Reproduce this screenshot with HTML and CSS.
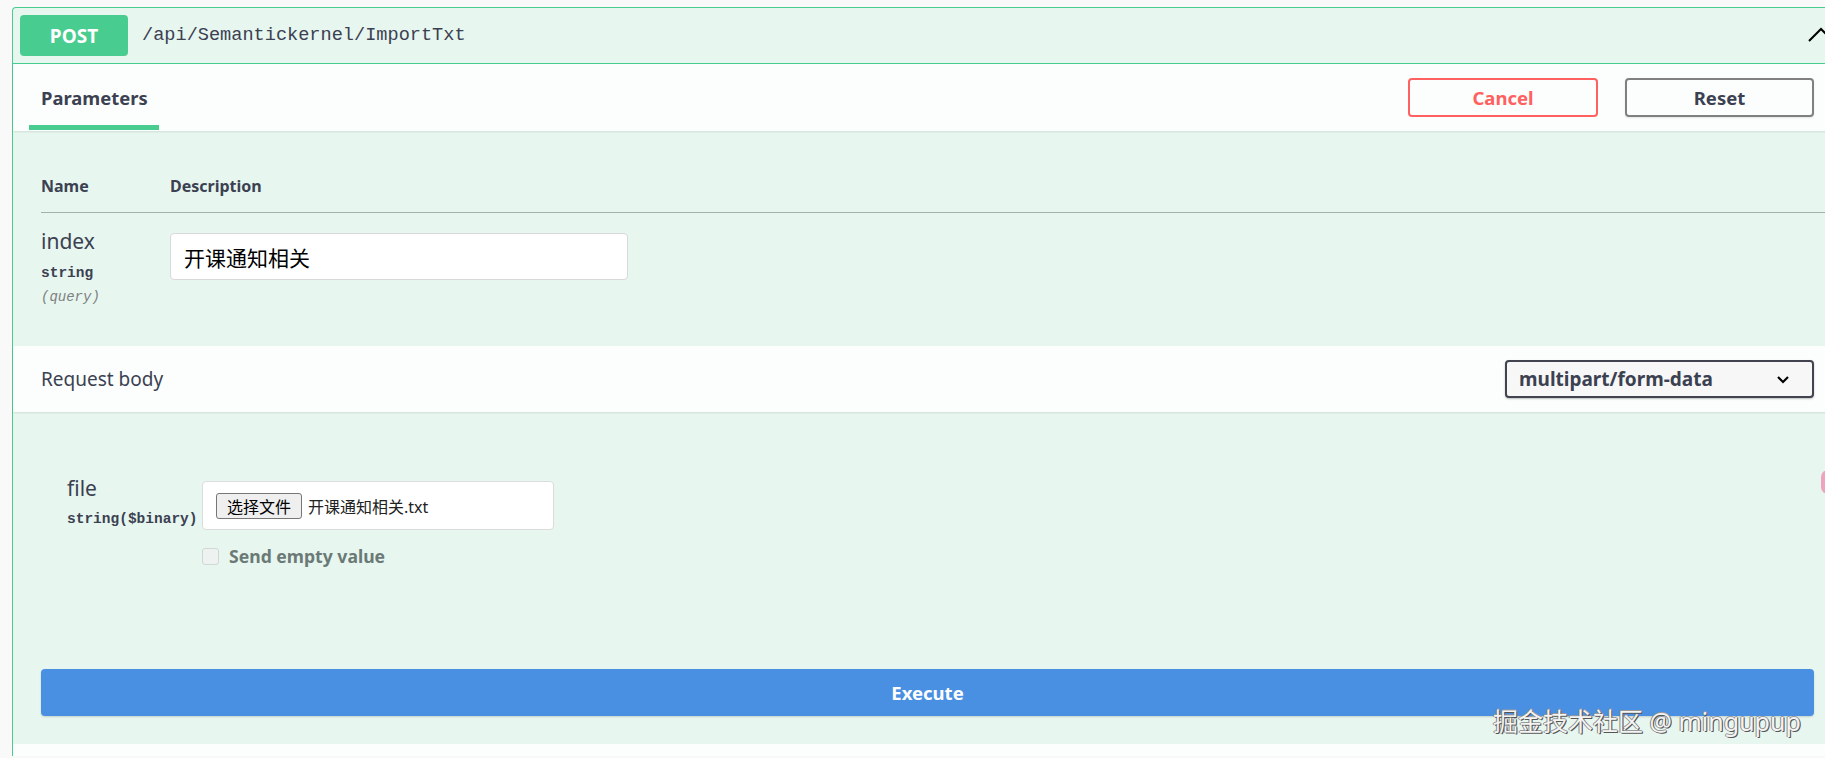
FILE: index.html
```html
<!DOCTYPE html>
<html lang="zh-CN">
<head>
<meta charset="utf-8">
<title>Swagger - ImportTxt</title>
<link rel="stylesheet" href="styles.css">
</head>
<body>
<div class="opblock">
  <div class="summary">
    <span class="method">POST</span>
    <span class="path">/api/Semantickernel/ImportTxt</span>
    <svg class="toggle" width="26" height="15" viewBox="0 0 26 15"><polyline points="1,14 13,2 25,14" fill="none" stroke="#000" stroke-width="2"/></svg>
  </div>
  <div class="opbody">
    <div class="section-header">
      <div class="tab">Parameters</div>
      <div class="actions">
        <button class="btn cancel">Cancel</button>
        <button class="btn reset">Reset</button>
      </div>
    </div>
    <div class="params">
      <div class="params-head">
        <div class="col-name">Name</div>
        <div class="col-desc">Description</div>
      </div>
      <div class="param-row">
        <div class="col-name">
          <div class="pname">index</div>
          <div class="ptype">string</div>
          <div class="pin">(query)</div>
        </div>
        <div class="col-desc">
          <div class="text-input">开课通知相关</div>
        </div>
      </div>
    </div>
    <div class="section-header rb">
      <div class="rb-title">Request body</div>
      <div class="select">
        <span>multipart/form-data</span>
        <svg width="14" height="9" viewBox="0 0 14 9"><polyline points="2,2 7,7 12,2" fill="none" stroke="#000" stroke-width="2.2"/></svg>
      </div>
    </div>
    <div class="rb-content">
      <div class="file-row">
        <div class="file-name-col">
          <div class="fname">file</div>
          <div class="ftype">string($binary)</div>
        </div>
        <div class="file-field">
          <div class="file-input"><span class="file-btn">选择文件</span><span class="file-val">开课通知相关.txt</span></div>
          <div class="empty"><span class="cb"></span><span>Send empty value</span></div>
        </div>
      </div>
    </div>
    <div class="execute-wrap">
      <button class="execute">Execute</button>
    </div>
  </div>
  <div class="responses"></div>
</div>
<div class="watermark">掘金技术社区 @ mingupup</div>
<div class="blob"></div>
</body>
</html>
```
FILE: styles.css
```css
html, body {
  margin: 0;
  padding: 0;
  overflow: hidden;
  background: #f9f9f9;
  height: 758px;
}
body {
  padding: 7px 0 0 12px;
  box-sizing: border-box;
  font-family: "Noto Sans", "Noto Sans CJK SC", sans-serif;
  color: #3b4151;
  position: relative;
}
.opblock {
  width: 1831px;
  box-sizing: border-box;
  border: 1px solid #49cc90;
  border-bottom: none;
  border-radius: 4px 4px 0 0;
  background: #e7f6ef;
}
.summary {
  height: 55px;
  border-bottom: 1px solid #49cc90;
  display: flex;
  align-items: center;
  padding-left: 7px;
}
.method {
  width: 108px;
  height: 41px;
  border-radius: 4px;
  background: #49cc90;
  color: #fff;
  font-weight: 700;
  font-size: 19px;
  display: flex;
  align-items: center;
  justify-content: center;
}
.path {
  margin-left: 14px;
  font-family: "Liberation Mono", "Noto Sans CJK SC", monospace;
  font-size: 18.6px;
  color: #3b4151;
  flex: 1;
}
.toggle {
  margin-right: 8px;
  margin-top: -2px;
}
.section-header {
  height: 67px;
  background: rgba(255,255,255,0.85);
  box-shadow: 0 1px 2px rgba(0,0,0,0.1);
  display: flex;
  align-items: center;
  padding: 0 28px 0 16px;
  position: relative;
}
.tab {
  height: 67px;
  padding: 0 12px;
  display: flex;
  align-items: center;
  font-size: 18.4px;
  font-weight: 700;
  position: relative;
  flex: 1;
}
.tab::after {
  content: "";
  position: absolute;
  left: 0;
  bottom: 1px;
  width: 130px;
  height: 5px;
  background: #49cc90;
}
.actions {
  display: flex;
  gap: 27px;
}
.btn {
  width: 190px;
  height: 39px;
  border-radius: 4px;
  background: transparent;
  font-family: "Noto Sans", sans-serif;
  font-size: 18.5px;
  font-weight: 700;
  cursor: pointer;
}
.cancel {
  border: 2px solid #ff6060;
  color: #ff6060;
}
.reset {
  width: 189px;
  border: 2px solid #808080;
  color: #3b4151;
  box-shadow: 0 1px 2px rgba(0,0,0,0.1);
}
.params {
  padding: 40px 0 39px 28px;
}
.params-head {
  display: flex;
  line-height: 30px;
  padding-bottom: 11px;
  border-bottom: 1px solid #a3b2ab;
  font-size: 16px;
  font-weight: 700;
}
.col-name {
  width: 129px;
}
.col-desc {
  flex: 1;
}
.param-row {
  display: flex;
  padding-top: 14px;
}
.pname {
  font-size: 21px;
  line-height: 28px;
}
.ptype {
  margin-top: 8px;
  font-family: "Liberation Mono", monospace;
  font-size: 14.5px;
  font-weight: 700;
  line-height: 20px;
}
.pin {
  margin-top: 4px;
  font-family: "Liberation Mono", monospace;
  font-size: 14px;
  font-style: italic;
  color: #808080;
  line-height: 20px;
}
.text-input {
  margin-top: 6px;
  width: 458px;
  height: 47px;
  box-sizing: border-box;
  border: 1px solid #d9d9d9;
  border-radius: 4px;
  background: #fff;
  padding-left: 13px;
  display: flex;
  align-items: center;
  font-size: 21px;
  color: #000;
}
.rb {
  height: 66px;
  padding: 0 28px;
  justify-content: space-between;
}
.rb-title {
  font-size: 19px;
}
.select {
  width: 309px;
  height: 38px;
  box-sizing: border-box;
  border: 2px solid #41444e;
  border-radius: 4px;
  background: #f7f7f7;
  box-shadow: 0 1px 2px rgba(0,0,0,0.25);
  display: flex;
  align-items: center;
  justify-content: space-between;
  padding: 0 22px 0 12px;
  font-size: 19px;
  font-weight: 700;
}
.rb-content {
  padding: 64px 28px 0 54px;
}
.file-row {
  display: flex;
}
.file-name-col {
  width: 135px;
}
.fname {
  font-size: 21px;
  line-height: 24px;
}
.ftype {
  margin-top: 9px;
  font-family: "Liberation Mono", monospace;
  font-size: 14.5px;
  font-weight: 700;
  line-height: 20px;
  white-space: nowrap;
}
.file-field {
  padding-top: 5px;
}
.file-input {
  width: 352px;
  height: 49px;
  box-sizing: border-box;
  border: 1px solid #dcdcdc;
  border-radius: 4px;
  background: #fff;
  display: flex;
  align-items: center;
  padding-left: 13px;
  font-size: 16px;
  color: #222;
}
.file-btn {
  height: 26px;
  box-sizing: border-box;
  padding: 0 10px;
  border: 1px solid #767676;
  border-radius: 3px;
  background: #efefef;
  display: flex;
  align-items: center;
  color: #000;
  margin-right: 6px;
}
.empty {
  margin-top: 14px;
  display: flex;
  align-items: center;
  gap: 10px;
  font-size: 17.6px;
  font-weight: 700;
  color: #6b7a76;
}
.cb {
  width: 17px;
  height: 17px;
  box-sizing: border-box;
  border: 1px solid #cfd8d4;
  border-radius: 3px;
  background: #eef3f1;
}
.execute-wrap {
  padding: 101px 28px 28px 28px;
}
.execute {
  width: 100%;
  height: 47px;
  border: none;
  border-radius: 4px;
  background: #4990e2;
  color: #fff;
  font-family: "Noto Sans", sans-serif;
  font-size: 18.5px;
  font-weight: 700;
  box-shadow: 0 1px 2px rgba(0,0,0,0.15);
}
.responses {
  height: 12px;
  background: #fcfefd;
}
.watermark {
  position: absolute;
  left: 1493px;
  top: 706px;
  font-size: 25px;
  line-height: 30px;
  color: #f4f4f4;
  white-space: nowrap;
  text-shadow: 1px 1px 0 #555, -1px 0 0 #888, 0 -1px 0 #999, 1px 0 0 #777;
}
.blob {
  position: absolute;
  left: 1821px;
  top: 470px;
  width: 14px;
  height: 24px;
  border-radius: 7px;
  background: rgba(240, 130, 170, 0.7);
}
```
